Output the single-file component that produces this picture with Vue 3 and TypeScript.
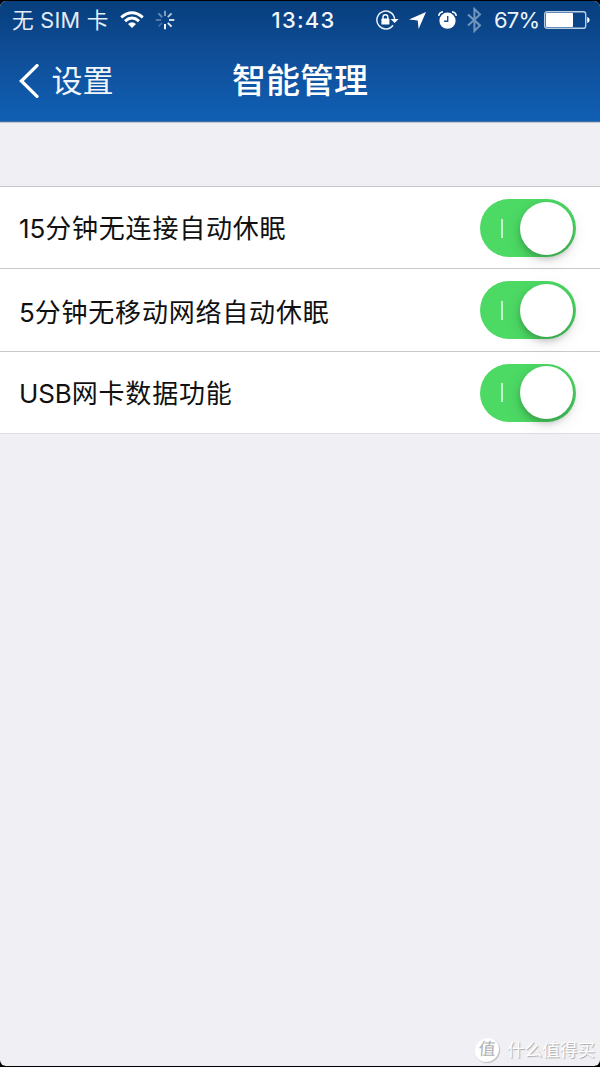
<script setup lang="ts">
import { ref } from 'vue'

interface Setting {
  id: string
  prefix: string
  label: string
  on: boolean
}

const settings = ref<Setting[]>([
  { id: 'sleep-idle', prefix: '15', label: '分钟无连接自动休眠', on: true },
  { id: 'sleep-network', prefix: '5', label: '分钟无移动网络自动休眠', on: true },
  { id: 'usb-data', prefix: 'USB', label: '网卡数据功能', on: true },
])

const spokes = [0.5, 0.7, 0.85, 0.9, 1, 0.2, 0.3, 0.4]
</script>

<template>
  <div class="device">
    <div class="screen">
      <header class="header">
        <div class="status">
          <div class="status-left">
            <span class="carrier">无 SIM 卡</span>
            <svg class="wifi" width="24" height="18" viewBox="0 0 24 18">
              <g fill="none" stroke="#fff" stroke-width="2.9">
                <path d="M1.2 6.3Q12-3 22.8 6.3" />
                <path d="M5 10.1Q12 4.1 19 10.1" />
              </g>
              <path d="M8 13Q12 9.6 16 13L12 17Z" fill="#fff" />
            </svg>
            <svg class="spinner" width="20" height="20" viewBox="-10 -10 20 20">
              <line
                v-for="(opacity, i) in spokes"
                :key="i"
                x1="0" y1="-4" x2="0" y2="-9.3"
                stroke="#fff" stroke-width="1.9"
                :opacity="opacity"
                :transform="`rotate(${i * 45})`"
              />
            </svg>
          </div>
          <span class="clock">13:43</span>
          <div class="status-right">
            <svg class="lock" width="23" height="20" viewBox="0 0 23 20">
              <path d="M17 15.2A8.9 8.9 0 1 1 18.6 8.8" fill="none" stroke="#e9f0f8" stroke-width="1.5" />
              <path d="M14.6 9h8l-4 4z" fill="#fff" />
              <rect x="5.4" y="8.6" width="8" height="6" rx=".6" fill="#fff" />
              <path d="M7 9V7.2a2.4 2.4 0 0 1 4.8 0V9" fill="none" stroke="#fff" stroke-width="1.4" />
            </svg>
            <svg class="arrow" width="17" height="17" viewBox="0 0 17 17">
              <path d="M17 0L9.6 17L8.7 8.5L0 7.5Z" fill="#fff" />
            </svg>
            <svg class="alarm" width="19" height="18" viewBox="0 0 19 18">
              <circle cx="9.5" cy="9.7" r="8.1" fill="#fff" />
              <path d="M.6 4.8Q1.4 1.4 5 .8M18.4 4.8Q17.6 1.4 14 .8" fill="none" stroke="#fff" stroke-width="1.5" />
              <path d="M9.7 5v5.2H6" fill="none" stroke="#174f91" stroke-width="1.4" />
            </svg>
            <svg class="bluetooth" width="15" height="26" viewBox="0 0 15 26">
              <path d="M1 7.4L13 18.4L7.4 24V2L13 7.5L1 18.6" fill="none" stroke="#7295bf" stroke-width="2" />
            </svg>
            <span class="percent">67%</span>
            <svg class="battery" width="46" height="18" viewBox="0 0 46 18">
              <rect x=".7" y=".7" width="41" height="16.6" rx="2.4" fill="none" stroke="#b9cde2" stroke-width="1.4" />
              <rect x="2" y="2" width="27" height="14" rx=".8" fill="#fff" />
              <path d="M43.2 6q2.4.7 2.4 3t-2.4 3z" fill="#fff" />
            </svg>
          </div>
        </div>
        <nav class="nav">
          <div class="back">
            <svg width="20" height="34" viewBox="0 0 20 34">
              <path d="M18 1.6L2.4 17L18 32.4" fill="none" stroke="#fff" stroke-width="3.3" stroke-linecap="round" />
            </svg>
            <span class="back-label">设置</span>
          </div>
          <h1 class="title">智能管理</h1>
        </nav>
      </header>

      <main class="list">
        <label v-for="item in settings" :key="item.id" class="row">
          <span class="label"><span class="latin">{{ item.prefix }}</span>{{ item.label }}</span>
          <button
            type="button"
            class="switch"
            :class="{ on: item.on }"
            role="switch"
            :aria-checked="item.on"
            @click="item.on = !item.on"
          >
            <span class="mark"></span>
            <span class="knob"></span>
          </button>
        </label>
      </main>

      <footer class="watermark">
        <span class="badge">值</span>
        <span class="brand">什么值得买</span>
      </footer>
    </div>
  </div>
</template>

<style>
body {
  margin: 0;
  background: #000;
}
</style>

<style scoped>
.device {
  box-sizing: border-box;
  width: 600px;
  height: 1067px;
  padding: 1px 0;
  background: #000;
  font-family: Inter, "Noto Sans CJK SC", sans-serif;
  overflow: hidden;
}
.screen {
  display: flex;
  flex-direction: column;
  height: 1065px;
  border-radius: 6px;
  background: #efeff4;
  overflow: hidden;
}
.header {
  box-sizing: border-box;
  height: 121px;
  flex: none;
  background: linear-gradient(#073e7d 0, #0f4e98 45%, #105fb4 100%);
  border-bottom: 1px solid #3d6faa;
  box-shadow: 0 1px 0 #c4c4cb;
  color: #fff;
}
.status {
  display: grid;
  grid-template-columns: 1fr auto 1fr;
  align-items: center;
  height: 38px;
  padding: 0 10px 0 12px;
}
.status-left,
.status-right {
  display: flex;
  align-items: center;
}
.status-right {
  justify-content: flex-end;
}
.carrier {
  width: 98px;
  font-size: 21.7px;
  line-height: 38px;
  letter-spacing: 0.25px;
  white-space: nowrap;
  color: #e4ecf5;
}
.wifi {
  margin-left: 10px;
}
.spinner {
  margin-left: 11px;
}
.clock {
  padding-left: 5px;
  font-size: 22px;
  font-weight: 500;
  letter-spacing: 1.2px;
  color: #f2f6fb;
}
.arrow {
  margin-left: 10px;
}
.alarm {
  margin-left: 12px;
}
.bluetooth {
  margin-left: 10px;
}
.percent {
  margin-left: 12px;
  width: 44px;
  font-size: 22px;
  letter-spacing: -0.8px;
  color: #edf3f9;
}
.battery {
  margin-left: 6px;
}
.nav {
  display: grid;
  grid-template-columns: 1fr auto 1fr;
  align-items: center;
  height: 84px;
}
.back {
  display: flex;
  align-items: center;
  padding-left: 19px;
}
.back-label {
  margin-left: 12.5px;
  font-size: 31px;
  line-height: 40px;
  color: #f0f5fb;
}
.title {
  margin: 0;
  font-size: 34px;
  line-height: 40px;
  font-weight: 500;
}
.list {
  flex: none;
  margin-top: 64px;
  border-top: 1px solid #c8c7cc;
  background: #fff;
}
.row {
  box-sizing: border-box;
  display: flex;
  align-items: center;
  justify-content: space-between;
  height: 82.3px;
  padding: 0 24.5px 0 19px;
  border-bottom: 1px solid #c8c7cc;
}
.row:last-child {
  border-bottom-color: #dfdee4;
}
.label {
  padding-top: 3px;
  font-size: 26px;
  line-height: 40px;
  letter-spacing: 0.8px;
  color: #111;
  white-space: nowrap;
}
.row:nth-child(2) .label {
  padding-top: 6px;
}
.latin {
  letter-spacing: -0.1px;
}
.switch {
  box-sizing: border-box;
  display: flex;
  align-items: center;
  flex: none;
  width: 96px;
  height: 58px;
  margin-top: 1px;
  padding: 0 3px 0 21px;
  border: 0;
  border-radius: 29px;
  background: #ddd;
}
.switch.on {
  justify-content: space-between;
  background: #4cd964;
}
.mark {
  width: 2px;
  height: 19px;
  background: #c4f3cc;
}
.knob {
  width: 53px;
  height: 53px;
  border-radius: 50%;
  background: #fff;
  box-shadow: 0 4px 6px rgba(0, 0, 0, 0.2), 0 5px 18px rgba(0, 0, 0, 0.1);
}
.watermark {
  display: flex;
  align-items: center;
  gap: 8px;
  margin: auto 5px 3px auto;
  color: #fff;
}
.badge {
  width: 24px;
  height: 24px;
  border-radius: 50%;
  background: #fff;
  box-shadow: 1px 1px 1px #bbb;
  color: #b0b0b4;
  font-size: 17px;
  line-height: 23px;
  text-align: center;
  transform: skewX(-4deg);
}
.brand {
  font-size: 17.6px;
  line-height: 26px;
  text-shadow: 1px 1px 1px #aaa;
}
</style>
